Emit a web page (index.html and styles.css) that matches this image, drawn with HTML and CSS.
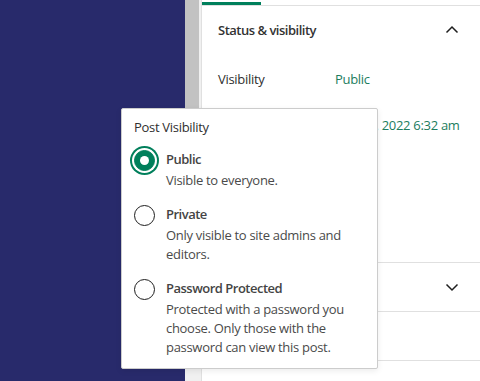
FILE: index.html
```html
<!DOCTYPE html>
<html lang="en">
<head>
    <meta charset="UTF-8">
    <title>Post Visibility</title>
    <link rel="stylesheet" href="styles.css">
</head>
<body>
    <div class="editor"></div>
    <div class="scrollbar"><div class="thumb"></div></div>

    <div class="sidebar">
        <div class="tabs"><span class="tab active"></span></div>

        <div class="panel">
            <div class="panel-header">
                <span>Status &amp; visibility</span>
                <svg class="chevron" width="24" height="24" viewBox="0 0 24 24"><path d="M6.5 14.5 12 9l5.5 5.5" /></svg>
            </div>
            <div class="panel-body">
                <div class="row">
                    <span class="row-label">Visibility</span>
                    <span class="row-value">Public</span>
                </div>
                <div class="row">
                    <span class="row-label">Publish</span>
                    <span class="row-value">Nov 14, 2022 6:32 am</span>
                </div>
            </div>
        </div>

        <div class="panel">
            <div class="panel-header">
                <span>Permalink</span>
                <svg class="chevron" width="24" height="24" viewBox="0 0 24 24"><path d="M6.5 9.5 12 15l5.5-5.5" /></svg>
            </div>
        </div>

        <div class="panel">
            <div class="panel-header"></div>
        </div>

        <div class="panel">
            <div class="panel-header short"><span class="tail">Publish</span></div>
        </div>
    </div>

    <div class="popover">
        <div class="popover-title">Post Visibility</div>

        <label class="option">
            <span class="radio checked"></span>
            <span class="option-text">
                <span class="option-name">Public</span>
                <span class="option-desc">Visible to everyone.</span>
            </span>
        </label>

        <label class="option">
            <span class="radio"></span>
            <span class="option-text">
                <span class="option-name">Private</span>
                <span class="option-desc">Only visible to site admins and editors.</span>
            </span>
        </label>

        <label class="option">
            <span class="radio"></span>
            <span class="option-text">
                <span class="option-name">Password Protected</span>
                <span class="option-desc">Protected with a password you choose. Only those with the password can view this post.</span>
            </span>
        </label>
    </div>
</body>
</html>
```

FILE: styles.css
```css
body {
    margin: 0;
    height: 381px;
    overflow: hidden;
    display: flex;
    font-family: "Open Sans", "Noto Sans", sans-serif;
    font-size: 13px;
    letter-spacing: -0.3px;
    color: #1e1e1e;
    background: #fff;
}
.editor {
    width: 185px;
    flex-shrink: 0;
    background: #282a6b;
}
.scrollbar {
    width: 16px;
    flex-shrink: 0;
    background: #f0f0f0;
}
.thumb {
    width: 14px;
    height: 220px;
    background: #c2c2c2;
}
.sidebar {
    flex: 1;
    min-width: 0;
    overflow: hidden;
    border-left: 1px solid #e0e0e0;
}
.tabs {
    height: 5px;
    border-bottom: 1px solid #e0e0e0;
    display: flex;
    align-items: flex-end;
}
.tab.active {
    display: block;
    width: 59px;
    height: 3px;
    background: #007f5b;
}
.panel {
    border-bottom: 1px solid #e0e0e0;
}
.panel-header {
    height: 48px;
    padding: 0 16px;
    display: flex;
    align-items: center;
    justify-content: space-between;
    font-weight: 600;
    letter-spacing: -0.5px;
    color: #333;
}
.panel-header.short {
    height: 40px;
    align-items: flex-end;
}
.tail {
    padding-left: 24px;
}
.chevron {
    fill: none;
    stroke: #1e1e1e;
    stroke-width: 1.5;
    margin-right: 0;
}
.panel-body {
    height: 160px;
    padding: 2px 16px 46px;
}
.row {
    display: flex;
    height: 46px;
    align-items: center;
}
.row-label {
    width: 117px;
    flex-shrink: 0;
    color: #2f2f2f;
}
.row-value {
    color: #1c7d5e;
    white-space: nowrap;
}
.popover {
    position: absolute;
    left: 121px;
    top: 108px;
    width: 232px;
    padding: 8px 11px 11px 12px;
    background: #fff;
    border: 1px solid #cccccc;
    border-radius: 2px;
    box-shadow: 0 2px 6px rgba(0, 0, 0, 0.08);
}
.popover-title {
    line-height: 20px;
    margin-bottom: 12px;
    color: #2f2f2f;
}
.option {
    display: flex;
    gap: 11px;
    margin-bottom: 14px;
}
.option:last-child {
    margin-bottom: 0;
}
.radio {
    width: 19px;
    height: 19px;
    margin-top: 0.5px;
    flex-shrink: 0;
    border: 1px solid #1e1e1e;
    border-radius: 50%;
    box-sizing: content-box;
    position: relative;
}
.radio.checked {
    background: #007f5b;
    border-color: #007f5b;
    box-shadow: 0 0 0 2px #fff, 0 0 0 4px #007f5b;
}
.radio.checked::after {
    content: "";
    position: absolute;
    left: 5px;
    top: 5px;
    width: 9px;
    height: 9px;
    border-radius: 50%;
    background: #fff;
}
.option-text {
    display: flex;
    flex-direction: column;
}
.option-name {
    line-height: 20px;
    font-weight: 600;
    letter-spacing: -0.5px;
    color: #444;
}
.option-desc {
    margin-top: 2px;
    line-height: 19px;
    color: #4a4a4a;
}
```
